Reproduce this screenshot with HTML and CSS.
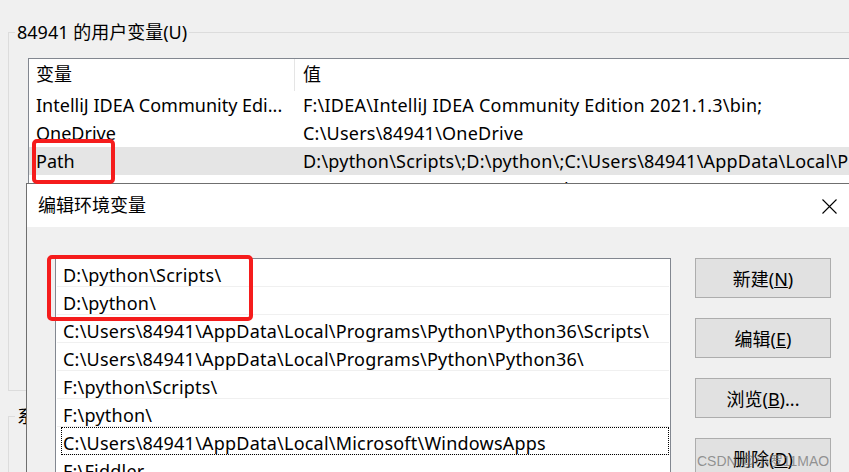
FILE: index.html
```html
<!DOCTYPE html>
<html lang="zh-CN">
<head>
    <meta charset="UTF-8">
    <title>环境变量</title>
    <link rel="stylesheet" href="styles.css">
</head>
<body>
    <div class="window">
        <div class="group user-group">
            <span class="group-label">84941 的用户变量(U)</span>
            <div class="var-list">
                <div class="var-row head">
                    <div class="cell name">变量</div>
                    <div class="cell value">值</div>
                </div>
                <div class="var-row">
                    <div class="cell name">IntelliJ IDEA Community Edi...</div>
                    <div class="cell value">F:\IDEA\IntelliJ IDEA Community Edition 2021.1.3\bin;</div>
                </div>
                <div class="var-row">
                    <div class="cell name">OneDrive</div>
                    <div class="cell value">C:\Users\84941\OneDrive</div>
                </div>
                <div class="var-row selected">
                    <div class="cell name">Path</div>
                    <div class="cell value">D:\python\Scripts\;D:\python\;C:\Users\84941\AppData\Local\Programs\Python\Python36\Scripts\;</div>
                </div>
                <div class="var-row">
                    <div class="cell name">TEMP</div>
                    <div class="cell value">C:\Users\84941\AppData\Local\Temp</div>
                </div>
            </div>
        </div>
        <div class="group sys-group">
            <span class="group-label">系统变量(S)</span>
        </div>
    </div>

    <!-- edit dialog on top -->
    <div class="dialog">
        <div class="dlg-title">
            <span>编辑环境变量</span>
            <svg class="close" width="15" height="15" viewBox="0 0 15 15">
                <path d="M0.5 0.5 L14.5 14.5 M14.5 0.5 L0.5 14.5" stroke="#000" stroke-width="1.1" fill="none"/>
            </svg>
        </div>
        <div class="dlg-body">
            <div class="path-list">
                <div class="path-row">D:\python\Scripts\</div>
                <div class="path-row">D:\python\</div>
                <div class="path-row">C:\Users\84941\AppData\Local\Programs\Python\Python36\Scripts\</div>
                <div class="path-row">C:\Users\84941\AppData\Local\Programs\Python\Python36\</div>
                <div class="path-row">F:\python\Scripts\</div>
                <div class="path-row">F:\python\</div>
                <div class="path-row focus">C:\Users\84941\AppData\Local\Microsoft\WindowsApps</div>
                <div class="path-row">F:\Fiddler</div>
            </div>
            <div class="dlg-buttons">
                <button class="btn">新建(<u>N</u>)</button>
                <button class="btn">编辑(<u>E</u>)</button>
                <button class="btn">浏览(<u>B</u>)...</button>
                <button class="btn">删除(<u>D</u>)</button>
            </div>
        </div>
    </div>

    <div class="mark mark-path"></div>
    <div class="mark mark-list"></div>
    <div class="watermark">CSDN @小罗11MAO</div>
</body>
</html>
```

FILE: styles.css
```css
body {
    margin: 0;
    width: 849px;
    height: 472px;
    overflow: hidden;
    position: relative;
    background-color: #f0f0f0;
    color: #000;
    font-family: "Noto Sans", "Noto Sans CJK SC", sans-serif;
    font-size: 18px;
}
.window {
    padding: 32px 0 0 8px;
}
.group {
    position: relative;
    border-top: 1px solid #dcdcdc;
    border-left: 1px solid #dcdcdc;
    border-bottom: 1px solid #dcdcdc;
}
.user-group {
    height: 359px;
    padding: 25px 0 0 19px;
    box-sizing: border-box;
}
.sys-group {
    margin-top: 25px;
    height: 80px;
    border-bottom: none;
}
.group-label {
    position: absolute;
    left: 6px;
    top: -13px;
    padding: 0 2px;
    line-height: 24px;
    background-color: #f0f0f0;
    white-space: nowrap;
}
.var-list {
    border: 1px solid #828790;
    border-right: none;
    background-color: #fff;
    height: 200px;
    overflow: hidden;
}
.var-row {
    display: flex;
    height: 28px;
    line-height: 28px;
    white-space: nowrap;
}
.var-row.head {
    height: 32px;
    line-height: 32px;
}
.var-row.head .cell {
    line-height: 31px;
}
.var-row.head .name {
    border-right: 1px solid #e5e5e5;
}
.var-row.selected {
    background-color: #e5e5e5;
}
.cell {
    overflow: hidden;
}
.cell.name {
    width: 266px;
    flex: none;
    padding-left: 7px;
    box-sizing: border-box;
}
.cell.value {
    padding-left: 8px;
    letter-spacing: 0.22px;
}
.dialog {
    position: absolute;
    left: 26px;
    top: 183px;
    width: 830px;
    height: 300px;
    border-top: 1px solid #6f6f6f;
    border-left: 1px solid #6f6f6f;
    background-color: #f0f0f0;
}
.dlg-title {
    height: 43px;
    background-color: #fff;
    display: flex;
    align-items: center;
    justify-content: space-between;
    padding: 0 20px 0 11px;
}
.dlg-title span {
    font-family: "Noto Sans CJK SC", sans-serif;
    margin-top: -4px;
}
.close {
    display: block;
    margin-top: 1px;
}
.dlg-body {
    display: flex;
    gap: 24px;
    padding: 31px 0 0 28px;
}
.path-list {
    width: 616px;
    height: 260px;
    box-sizing: border-box;
    border: 1px solid #828790;
    background-color: #fff;
    padding: 0 1px;
}
.path-row {
    height: 27px;
    line-height: 32px;
    border-bottom: 1px solid #f0f0f0;
    padding-left: 6px;
    white-space: nowrap;
    overflow: hidden;
    letter-spacing: 0.22px;
}
.path-row.focus {
    outline: 1px dotted #000;
    outline-offset: -1px;
    margin-left: 4px;
    padding-left: 2px;
}
.dlg-buttons {
    display: flex;
    flex-direction: column;
    gap: 20px;
}
.btn {
    width: 136px;
    height: 40px;
    border: 1px solid #adadad;
    background-color: #e1e1e1;
    font-family: "Noto Sans", "Noto Sans CJK SC", sans-serif;
    font-size: 18px;
    color: #000;
    padding: 0;
}
.mark {
    position: absolute;
    border: 4px solid #f51c1c;
    border-radius: 5px;
}
.mark-path {
    left: 32px;
    top: 139px;
    width: 75px;
    height: 37px;
}
.mark-list {
    left: 47px;
    top: 255px;
    width: 198px;
    height: 58px;
}
.watermark {
    position: absolute;
    left: 697px;
    top: 450px;
    font-family: "Liberation Sans", sans-serif;
    font-size: 14px;
    color: rgba(110, 110, 110, 0.7);
    white-space: nowrap;
}
```
